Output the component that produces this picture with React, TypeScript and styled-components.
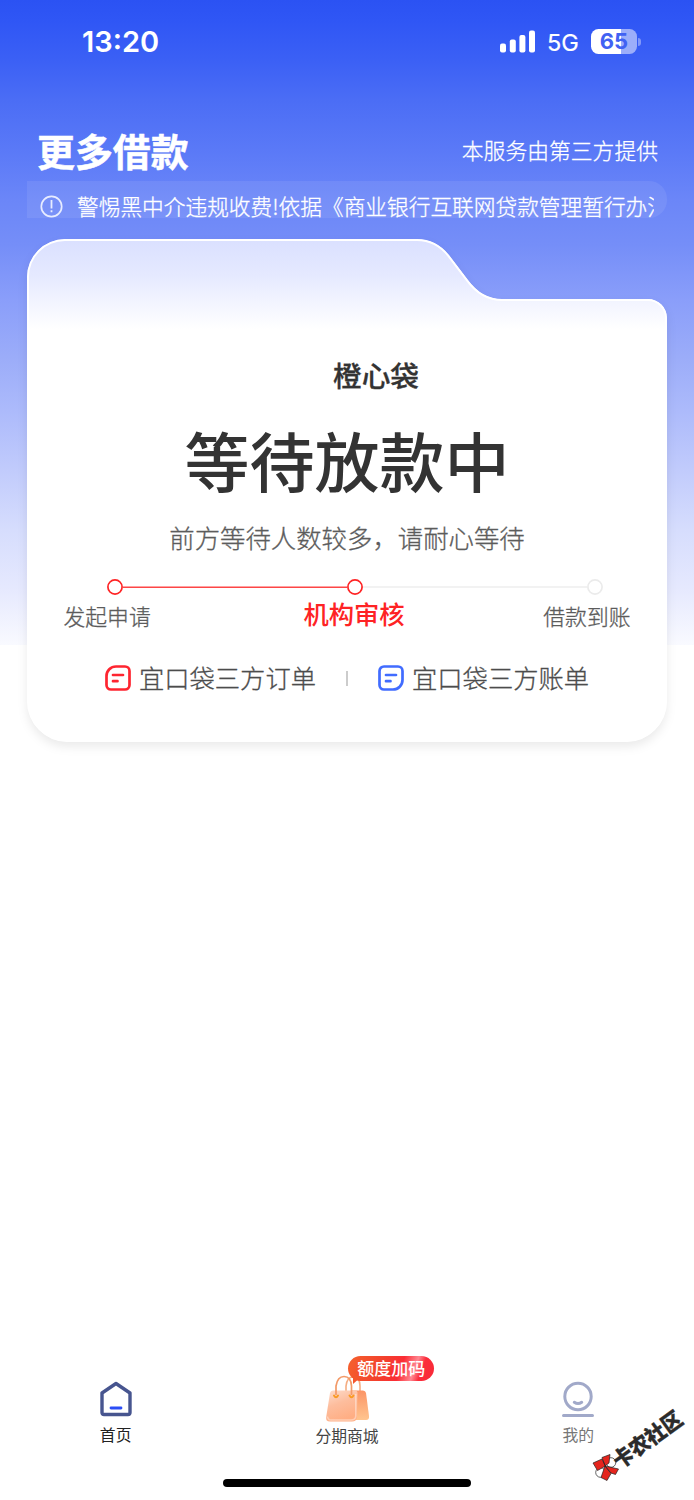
import React from "react";
import styled, { createGlobalStyle, css } from "styled-components";

const Global = createGlobalStyle`
  * { box-sizing: border-box; }
  body { margin: 0; background: #fff; font-family: "Noto Sans CJK SC", "Noto Sans", sans-serif; }
`;

const Screen = styled.div`
  position: relative;
  width: 694px;
  height: 1500px;
  overflow: hidden;
  display: flex;
  flex-direction: column;
  background: linear-gradient(180deg, #2b52f3 0, #2f56f5 20px, #3b60f5 60px, #4b6df5 100px, #5a79f7 150px, #6b86f8 200px, #758ef8 245px, #8a9efa 300px, #9cadf9 360px, #acbafb 410px, #c1cbfc 470px, #d6ddfd 530px, #e6e9fe 590px, #f9faff 645px) no-repeat 0 0 / 100% 645px #fff;
`;

const StatusBar = styled.div`
  height: 83px;
  flex: none;
  display: flex;
  align-items: center;
  padding: 0 53px 0 82px;
  color: #fff;
  font-family: Inter, sans-serif;
`;

const Clock = styled.span`
  font-size: 29px;
  font-weight: 600;
  line-height: 36px;
  flex: 1;
`;

const Network = styled.span`
  font-size: 23.5px;
  line-height: 30px;
  width: 33px;
  margin: 2px 11px 0 12px;
  -webkit-text-stroke: 0.2px #fff;
`;

const Battery = styled.div`
  width: 46px;
  height: 25px;
  border-radius: 7.5px;
  background: linear-gradient(90deg, #fff 30px, #9caefa 30px);
  color: #4162f3;
  font-size: 22px;
  font-weight: 700;
  line-height: 25px;
  text-align: center;
`;

const BatteryTip = styled.div`
  width: 3px;
  height: 8px;
  margin-left: 1px;
  border-radius: 0 4px 4px 0;
  background: #8298f9;
`;

const Header = styled.header`
  height: 98px;
  flex: none;
  display: flex;
  justify-content: space-between;
  padding: 42px 36px 0 37px;
  color: #fff;
`;

const Title = styled.h1`
  margin: 0;
  font-size: 37.9px;
  font-weight: 700;
  line-height: 50px;
  -webkit-text-stroke: 0.5px #fff;
`;

const Provider = styled.span`
  font-size: 21.8px;
  font-weight: 300;
  line-height: 50px;
  -webkit-text-stroke: 0.3px #fff;
`;

const Notice = styled.div`
  height: 37px;
  flex: none;
  margin: 0 27px;
  padding: 0 13px 0 13px;
  display: flex;
  align-items: center;
  border-radius: 0 18px 18px 0;
  background: rgba(255, 255, 255, 0.08);
  color: #fff;
`;

const NoticeText = styled.div`
  margin-left: 14px;
  flex: 1;
  height: 37px;
  overflow: hidden;
  white-space: nowrap;
  font-size: 21.7px;
  font-weight: 300;
  line-height: 49px;
  -webkit-text-stroke: 0.3px #fff;
`;

const NoticeIcon = styled.svg`
  margin-top: 13px;
`;

const Card = styled.section`
  position: relative;
  flex: none;
  margin: 21px 27px 0;
  height: 503px;
`;

const CardShape = styled.svg`
  position: absolute;
  inset: 0;
  overflow: visible;
  filter: drop-shadow(0 5px 5px rgba(0, 0, 0, 0.08));
`;

const CardBody = styled.div`
  position: relative;
  display: flex;
  flex-direction: column;
  align-items: center;
`;

const Brand = styled.div`
  margin: 116px 0 0 58px;
  font-size: 28.7px;
  font-weight: 500;
  line-height: 40px;
  color: #333;
  -webkit-text-stroke: 0.3px #333;
`;

const Status = styled.h2`
  margin: 17px 0 0;
  font-size: 65px;
  font-weight: 500;
  line-height: 94px;
  color: #333;
`;

const Hint = styled.p`
  margin: 11px 0 0;
  font-size: 25.4px;
  font-weight: 300;
  line-height: 40px;
  color: #5c5c5c;
  -webkit-text-stroke: 0.3px #5c5c5c;
`;

const Track = styled.div`
  width: 496px;
  margin: 22px 0 0 16px;
  height: 16px;
  display: flex;
  align-items: center;
`;

const Segment = styled.i<{ $on?: boolean }>`
  flex: 1;
  height: 2px;
  margin-bottom: 1px;
  background: ${(p) => (p.$on ? "linear-gradient(#ffa0a0 50%, #fc4646 50%)" : "#f2f2f2")};
`;

const Labels = styled.div`
  width: 567px;
  display: flex;
  justify-content: space-between;
`;

const Label = styled.span<{ $active?: boolean }>`
  font-size: 21.8px;
  font-weight: 300;
  line-height: 42px;
  color: #5c5c5c;
  -webkit-text-stroke: 0.3px #5c5c5c;
  ${(p) =>
    p.$active &&
    css`
      margin-left: 14px;
      font-size: 25.3px;
      font-weight: 500;
      line-height: 36px;
      color: #fe2324;
      -webkit-text-stroke: 0;
    `}
`;

const Links = styled.div`
  margin-top: 21px;
  display: flex;
  align-items: center;
  height: 40px;
`;

const LinkItem = styled.a`
  display: flex;
  align-items: center;
  gap: 8px;
  height: 40px;
  font-size: 25.3px;
  line-height: 38px;
  font-weight: 300;
  color: #4c4c4c;
  -webkit-text-stroke: 0.3px #4c4c4c;
`;

const LinkText = styled.span`
  height: 40px;
`;

const Divider = styled.i`
  width: 2px;
  height: 15px;
  margin: 0 30px;
  background: #ccc;
`;

const TabBar = styled.nav`
  margin-top: auto;
  height: 102px;
  display: flex;
`;

const Tab = styled.div<{ $color: string }>`
  flex: 1;
  position: relative;
  display: flex;
  flex-direction: column;
  align-items: center;
  justify-content: space-between;
  height: 69px;
  font-size: 15.8px;
  line-height: 22px;
  color: ${(p) => p.$color};
`;

const IconBox = styled.div`
  height: 48px;
  display: flex;
  align-items: flex-end;
`;

const BagIcon = styled.svg`
  margin: 0 0 1px 2px;
`;

const Promo = styled.span`
  position: absolute;
  top: -21px;
  left: 117px;
  width: 86px;
  height: 25px;
  border-radius: 13px;
  background: linear-gradient(110deg, #f5622d 0, #f3402d 40%, #fb2d35 60%, #ff8791 75%, #fb2d3b 83%, #f82936 100%);
  color: #fff;
  font-size: 17px;
  font-weight: 500;
  line-height: 23px;
  text-align: center;

  &::after {
    content: "";
    position: absolute;
    left: 5px;
    top: 20px;
    border: solid transparent;
    border-width: 8px 9px 0 0;
    border-top-color: #f4562d;
  }
`;

const HomeIndicator = styled.div`
  align-self: center;
  flex: none;
  width: 248px;
  height: 8px;
  margin-bottom: 13px;
  border-radius: 4px;
  background: #000;
`;

const Watermark = styled.div`
  position: absolute;
  left: 592px;
  top: 1407px;
  width: 102px;
  height: 75px;
  display: flex;
  align-items: flex-end;
`;

const WatermarkText = styled.span`
  position: absolute;
  left: 15px;
  top: 20px;
  transform: rotate(-36deg) scaleY(1.08);
  color: #2b2b2b;
  font-size: 20px;
  font-weight: 900;
  line-height: 24px;
  white-space: nowrap;
  -webkit-text-stroke: 0.3px #2b2b2b;
`;

const FOLDER =
  "M0 38A38 38 0 0 1 38 0H390Q409 0 422 16L441 41Q455 60 475 60H621A19 19 0 0 1 640 79V462A41 41 0 0 1 599 503H41A41 41 0 0 1 0 462Z";

function Dot({ color }: { color: string }) {
  return (
    <svg width="16" height="16" viewBox="0 0 16 16" fill="none">
      <circle cx="8" cy="8" r="7.1" stroke={color} strokeWidth="1.7" />
    </svg>
  );
}

function Doc({ color, flip }: { color: string; flip?: boolean }) {
  return (
    <svg width="26" height="26" viewBox="0 0 26 26" fill="none" stroke={color} strokeWidth="2.7" strokeLinecap="round">
      <path
        d={
          flip
            ? "M6 1.5H20A4.5 4.5 0 0 1 24.5 6V15A9.5 9.5 0 0 1 15 24.5H6A4.5 4.5 0 0 1 1.5 20V6A4.5 4.5 0 0 1 6 1.5Z"
            : "M11 1.5H20A4.5 4.5 0 0 1 24.5 6V20A4.5 4.5 0 0 1 20 24.5H6A4.5 4.5 0 0 1 1.5 20V11A9.5 9.5 0 0 1 11 1.5Z"
        }
      />
      <path d="M8 10H18M8 16.2H12.5" />
    </svg>
  );
}

export default function App() {
  return (
    <Screen>
      <Global />
      <StatusBar>
        <Clock>13:20</Clock>
        <svg width="35" height="23" viewBox="0 0 35 23" fill="#fff">
          <rect x="0" y="13.5" width="6" height="9" rx="2" />
          <rect x="9.8" y="9.5" width="6" height="13" rx="2" />
          <rect x="19.4" y="5" width="6" height="17.5" rx="2" />
          <rect x="29" y="0.5" width="6" height="22" rx="2" />
        </svg>
        <Network>5G</Network>
        <Battery>65</Battery>
        <BatteryTip />
      </StatusBar>
      <Header>
        <Title>更多借款</Title>
        <Provider>本服务由第三方提供</Provider>
      </Header>
      <Notice>
        <NoticeIcon width="23" height="23" viewBox="0 0 23 23" fill="none" stroke="#e7ecff" strokeWidth="1.7">
          <circle cx="11.5" cy="11.5" r="10.2" />
          <path d="M11.5 5V13.5M11.5 15.3V17.3" strokeWidth="1.8" />
        </NoticeIcon>
        <NoticeText>警惕黑中介违规收费!依据《商业银行互联网贷款管理暂行办法》</NoticeText>
      </Notice>
      <Card>
        <CardShape width="640" height="503" viewBox="0 0 640 503">
          <defs>
            <linearGradient id="sheet" gradientUnits="userSpaceOnUse" x1="0" y1="0" x2="0" y2="90">
              <stop offset="0" stopColor="#dae0ff" />
              <stop offset="0.4" stopColor="#e5e9ff" />
              <stop offset="1" stopColor="#fff" />
            </linearGradient>
            <clipPath id="folder">
              <path d={FOLDER} />
            </clipPath>
          </defs>
          <path d={FOLDER} fill="url(#sheet)" stroke="#fff" strokeWidth="4" clipPath="url(#folder)" />
        </CardShape>
        <CardBody>
          <Brand>橙心袋</Brand>
          <Status>等待放款中</Status>
          <Hint>前方等待人数较多，请耐心等待</Hint>
          <Track>
            <Dot color="#fe2324" />
            <Segment $on />
            <Dot color="#fe2324" />
            <Segment />
            <Dot color="#ebebeb" />
          </Track>
          <Labels>
            <Label>发起申请</Label>
            <Label $active>机构审核</Label>
            <Label>借款到账</Label>
          </Labels>
          <Links>
            <LinkItem>
              <Doc color="#fe2530" />
              <LinkText>宜口袋三方订单</LinkText>
            </LinkItem>
            <Divider />
            <LinkItem>
              <Doc color="#416cff" flip />
              <LinkText>宜口袋三方账单</LinkText>
            </LinkItem>
          </Links>
        </CardBody>
      </Card>
      <TabBar>
        <Tab $color="#222">
          <IconBox>
            <svg width="32" height="44" viewBox="0 0 32 44" fill="none" strokeLinejoin="round" strokeLinecap="round">
              <path d="M2 13 16 3.500 30 13V32.500Q30 34.500 28 34.500H4Q2 34.500 2 32.500Z" stroke="#47558f" strokeWidth="3.4" />
              <path d="M11 28H21" stroke="#2b4df6" strokeWidth="2.8" />
            </svg>
          </IconBox>
          首页
        </Tab>
        <Tab $color="#444">
          <IconBox>
            <BagIcon width="48" height="50" viewBox="0 0 48 50" fill="none">
              <defs>
                <linearGradient id="bag" x1="0" y1="0" x2="0.4" y2="1">
                  <stop offset="0" stopColor="#fddccc" />
                  <stop offset="0.5" stopColor="#fdbd9d" />
                  <stop offset="1" stopColor="#ffae84" />
                </linearGradient>
                <linearGradient id="side" x1="0" y1="0" x2="0" y2="1">
                  <stop offset="0" stopColor="#fb9466" />
                  <stop offset="1" stopColor="#ffc58f" />
                </linearGradient>
              </defs>
              <path d="M22 18V12Q23 3 29 3Q36 3 36 12V19" stroke="#f5ad82" strokeWidth="1.6" />
              <path d="M27 16.5H39Q41.5 16.5 42 19L45 42Q45.5 46 42 46H27Z" fill="url(#side)" />
              <path d="M9 16.5H31Q33.5 16.5 33.5 19L33 43Q32.5 47.5 28 47.5H6Q1.5 47.5 2.2 43L6 19Q6.4 16.5 9 16.5Z" fill="url(#bag)" />
              <path d="M3.5 42.5Q4 46 7 46H27Q31.5 46 31.8 42V20" stroke="#fff" strokeOpacity="0.4" strokeWidth="1.6" />
              <path d="M12 21V12Q13.500 2.500 20 2.500Q27 2.500 27.500 12V21" stroke="#f39a68" strokeWidth="1.7" />
              <path d="M10 21.500Q12 25 14 21.500M25.500 21.500Q27.500 25 29.500 21.500" stroke="#fa9b24" strokeWidth="2" strokeLinecap="round" />
            </BagIcon>
          </IconBox>
          分期商城
          <Promo>额度加码</Promo>
        </Tab>
        <Tab $color="#777">
          <IconBox>
            <svg width="32" height="44" viewBox="0 0 32 44" fill="none" stroke="#a1a9c9" strokeWidth="3" strokeLinecap="round">
              <circle cx="16" cy="16.5" r="13.2" />
              <path d="M12.3 22.3Q16 24.8 19.7 22.3M1.5 35.5H30.5" />
            </svg>
          </IconBox>
          我的
        </Tab>
      </TabBar>
      <HomeIndicator />
      <Watermark>
        <svg width="28" height="28" viewBox="0 0 28 28" stroke="#222" strokeWidth="0.7" strokeLinejoin="round">
          <circle cx="19" cy="8.5" r="4.8" fill="#fff" />
          <circle cx="8.5" cy="18.500" r="4.8" fill="#fff" />
          <path d="M1 9 10 5 13.500 12 5.500 16.500ZM10 3.5 18 0.500 17 9 13 12ZM13 12 26.500 15 23.500 20.500 19 19ZM13 12 19 19.500 15 26.500 9 23.500Z" fill="#e5251d" />
        </svg>
        <WatermarkText>卡农社区</WatermarkText>
      </Watermark>
    </Screen>
  );
}
